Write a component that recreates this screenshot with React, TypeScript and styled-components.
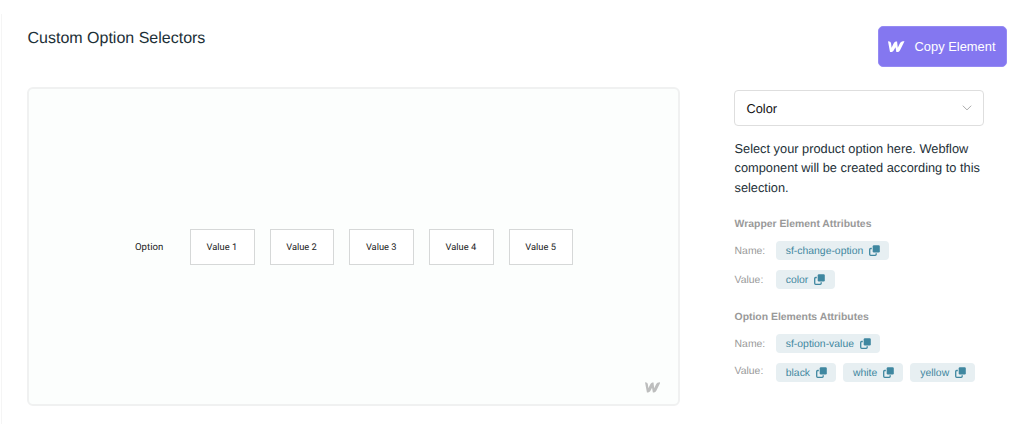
import styled, { createGlobalStyle } from 'styled-components';

const GlobalStyle = createGlobalStyle`
  * {
    box-sizing: border-box;
  }

  body {
    margin: 0;
    background: #fff;
    font-family: 'Liberation Sans', Arial, sans-serif;
    color: #1d3037;
    text-rendering: geometricPrecision;
  }
`;

const Page = styled.div`
  height: 438px;
  padding: 14px 0 14px 1px;
`;

const Panel = styled.section`
  height: 410px;
  padding: 12px 25px 0 25px;
  border-left: 1px solid #f5f5f5;
`;

const Header = styled.header`
  display: flex;
  justify-content: space-between;
  height: 41px;
`;

const Title = styled.h2`
  margin: 4px 0 0;
  padding-left: 0.5px;
  font-size: 16px;
  font-weight: 400;
  line-height: 18px;
`;

const CopyButton = styled.button`
  display: flex;
  align-items: center;
  width: 129px;
  height: 41px;
  padding: 0 0 0 9px;
  border: 1px solid #958af3;
  border-radius: 5px;
  background: #8477f0;
  color: #fff;
  font: 12.9px 'Liberation Sans', Arial, sans-serif;
  white-space: nowrap;

  > svg {
    margin-right: 10px;
  }
`;

const Content = styled.div`
  display: flex;
  align-items: flex-start;
`;

const Preview = styled.div`
  position: relative;
  display: flex;
  align-items: center;
  width: 653px;
  height: 319px;
  margin-top: 20px;
  padding-left: 106px;
  border: 2px solid #f0f1f1;
  border-radius: 6px;
  background: #fcfefd;
  font-family: Roboto, sans-serif;
  font-size: 9.3px;
  color: #222;
`;

const OptionLabel = styled.span`
  width: 55px;
  padding-top: 2px;
  font-size: 9.6px;
`;

const OptionValues = styled.div`
  display: flex;
  gap: 15px;
`;

const OptionValue = styled.div`
  display: flex;
  align-items: center;
  justify-content: center;
  width: 64.7px;
  height: 36px;
  padding: 2px 1px 0 0;
  border: 1px solid #d6d8d8;
  background: #fff;
`;

const PreviewMark = styled.span`
  position: absolute;
  right: 18px;
  bottom: 11px;
  display: flex;
`;

const Sidebar = styled.aside`
  width: 250px;
  margin: 23px 0 0 54px;
`;

const Select = styled.div`
  display: flex;
  align-items: center;
  justify-content: space-between;
  height: 36px;
  padding: 0 11px 0 11.5px;
  border: 1px solid #dedede;
  border-radius: 4px;
  font-size: 12.8px;
  color: #111;
`;

const Description = styled.p`
  margin: 13px 0 0;
  padding-left: 0.5px;
  font-size: 12.8px;
  line-height: 19.3px;
  white-space: nowrap;
`;

const Attributes = styled.div<{ $top: number }>`
  margin-top: ${({ $top }) => $top}px;
  padding-left: 0.6px;
`;

const AttributesTitle = styled.h3`
  margin: 0 0 10px;
  padding-top: 1px;
  font-size: 10.4px;
  line-height: 12px;
  color: #999;
`;

const AttributeRow = styled.div`
  display: flex;
  align-items: center;
  height: 19px;
  margin-bottom: 10px;
`;

const AttributeLabel = styled.span<{ $raised?: boolean }>`
  width: 41.4px;
  padding-top: ${({ $raised }) => ($raised ? 0 : 2)}px;
  padding-bottom: ${({ $raised }) => ($raised ? 1 : 0)}px;
  font-size: 10.4px;
  color: #999;
`;

const Tags = styled.div`
  display: flex;
  gap: 7px;
`;

const Tag = styled.span`
  display: flex;
  align-items: center;
  gap: 6px;
  height: 19px;
  padding: 0 9.2px 0 9.8px;
  border-radius: 4px;
  background: #e7eff2;
  font-size: 10.4px;
  color: #3f87a0;
  white-space: nowrap;
`;

const TagText = styled.span`
  padding-top: 2px;
`;

function WebflowMark({ width, color }: { width: number; color: string }) {
  return (
    <svg width={width} height={width * 0.7} viewBox="0 0 24 16.8" fill={color}>
      <path d="M0 .4C2.600.4 4.200 1.500 4.500 3.800L5.200 9.800 7.800 4.200C9 1.600 10.600.8 13.200.8L14.200 9.800 17 3.900C18.300 1.300 20.400.4 24 .4L17.700 13.200C16.600 15.500 15 16.400 12.200 16.400L10.900 9 8.700 13.200C7.500 15.500 5.800 16.400 3 16.400Z" />
    </svg>
  );
}

function CopyIcon() {
  return (
    <svg width="11" height="11" viewBox="0 0 11 11">
      <rect x="3.700" y="0.200" width="7.100" height="7.300" rx="1.200" fill="#3f87a0" />
      <path
        d="M2.800 3.500H1.700Q.7 3.500.7 4.500V9.300Q.7 10.300 1.700 10.300H6.200Q7.200 10.300 7.200 9.300V8.300"
        fill="none"
        stroke="#3f87a0"
        strokeWidth="1.300"
      />
    </svg>
  );
}

interface AttributeProps {
  label: string;
  values: string[];
  raised?: boolean;
}

function Attribute({ label, values, raised }: AttributeProps) {
  return (
    <AttributeRow>
      <AttributeLabel $raised={raised}>{label}:</AttributeLabel>
      <Tags>
        {values.map((value) => (
          <Tag key={value}>
            <TagText>{value}</TagText>
            <CopyIcon />
          </Tag>
        ))}
      </Tags>
    </AttributeRow>
  );
}

function App() {
  return (
    <>
      <GlobalStyle />
      <Page>
        <Panel>
          <Header>
            <Title>Custom Option Selectors</Title>
            <CopyButton>
              <WebflowMark width={16.5} color="#fff" />
              Copy Element
            </CopyButton>
          </Header>
          <Content>
            <Preview>
              <OptionLabel>Option</OptionLabel>
              <OptionValues>
                {[1, 2, 3, 4, 5].map((n) => (
                  <OptionValue key={n}>Value {n}</OptionValue>
                ))}
              </OptionValues>
              <PreviewMark>
                <WebflowMark width={15.5} color="#bdbebe" />
              </PreviewMark>
            </Preview>
            <Sidebar>
              <Select>
                Color
                <svg width="10" height="6" viewBox="0 0 10 6" fill="none">
                  <path d="M.8.7 5 4.900 9.200.7" stroke="#aaa" />
                </svg>
              </Select>
              <Description>
                Select your product option here. Webflow
                <br />
                component will be created according to this
                <br />
                selection.
              </Description>
              <Attributes $top={21}>
                <AttributesTitle>Wrapper Element Attributes</AttributesTitle>
                <Attribute label="Name" values={['sf-change-option']} />
                <Attribute label="Value" values={['color']} />
              </Attributes>
              <Attributes $top={22}>
                <AttributesTitle>Option Elements Attributes</AttributesTitle>
                <Attribute label="Name" values={['sf-option-value']} />
                <Attribute
                  label="Value"
                  values={['black', 'white', 'yellow']}
                  raised
                />
              </Attributes>
            </Sidebar>
          </Content>
        </Panel>
      </Page>
    </>
  );
}

export default App;
